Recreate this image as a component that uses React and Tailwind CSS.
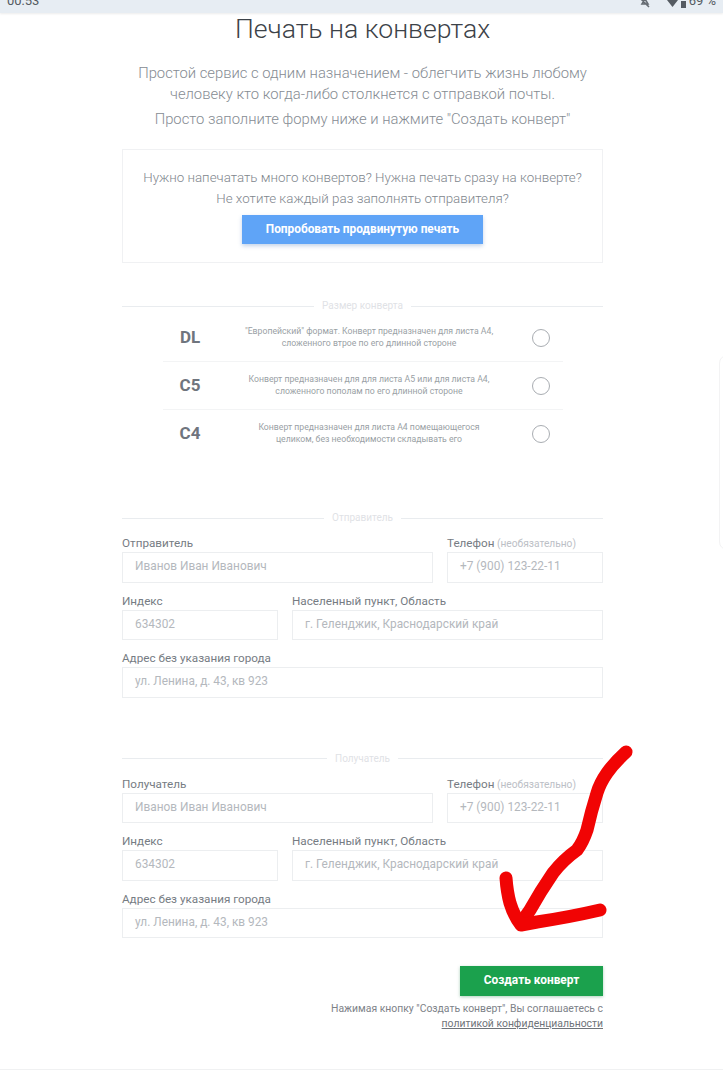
import React from "react";

const sizes = [
  { name: "DL", lines: ['"Европейский" формат. Конверт предназначен для листа А4,', "сложенного втрое по его длинной стороне"] },
  { name: "C5", lines: ["Конверт предназначен для для листа А5 или для листа А4,", "сложенного пополам по его длинной стороне"] },
  { name: "C4", lines: ["Конверт предназначен для листа А4 помещающегося", "целиком, без необходимости складывать его"] },
];

const Divider = ({ title, className }) => (
  <div className={`flex items-center gap-2 ${className}`}>
    <div className="h-px flex-1 bg-[#e9ecef]" />
    <span className="text-[10px] leading-3 text-[#dfe2e6]">{title}</span>
    <div className="h-px flex-1 bg-[#e9ecef]" />
  </div>
);

const Field = ({ label, hint, placeholder, className = "" }) => (
  <div className={className}>
    <div className="h-[18px] whitespace-nowrap text-[11.7px] leading-[18px] text-[#767c83]">
      {label}
      {hint && <span className="text-[10.2px] text-[#bcc0c6]"> {hint}</span>}
    </div>
    <div className="flex h-[30.5px] items-center border border-[#eceef0] pl-3 text-[11.85px] text-[#b4b8bd]">
      {placeholder}
    </div>
  </div>
);

const PersonForm = ({ label }) => (
  <div className="flex flex-col gap-[9px]">
    <div className="flex gap-[14px]">
      <Field label={label} placeholder="Иванов Иван Иванович" className="w-[311px]" />
      <Field label="Телефон" hint="(необязательно)" placeholder="+7 (900) 123-22-11" className="flex-1" />
    </div>
    <div className="flex gap-[14px]">
      <Field label="Индекс" placeholder="634302" className="w-[156px]" />
      <Field label="Населенный пункт, Область" placeholder="г. Геленджик, Краснодарский край" className="flex-1" />
    </div>
    <Field label="Адрес без указания города" placeholder="ул. Ленина, д. 43, кв 923" />
  </div>
);

export default function App() {
  return (
    <div className="relative h-[1080px] w-[723px] overflow-hidden bg-white font-['Roboto',sans-serif]">
      <div className="flex h-[13px] items-end justify-between overflow-hidden bg-[#e7edf3] pr-[7px] pb-[5px] pl-[7px] text-[13px] leading-[15px] text-[#555b62] shadow-[0_1px_2px_rgba(0,0,0,0.08)]">
        <span>00:53</span>
        <div className="flex items-end gap-[3px]">
          <svg width="10" height="10" viewBox="0 0 10 10" className="mr-[14px]" fill="none" stroke="#666c73" strokeWidth="1.6">
            <path d="M2 6 L5 1 L8 6 Z M1 1 L9 9" />
          </svg>
          <svg width="11" height="8" viewBox="0 0 11 8" fill="#555b62">
            <path d="M0 0 H11 L5.5 7 Z" />
          </svg>
          <div className="h-[7px] w-[5px] bg-[#555b62]" />
          <span>69 %</span>
        </div>
      </div>

      <main className="ml-[122px] w-[481px]">
        <h1 className="text-center text-[26.6px] leading-[32px] font-light whitespace-nowrap text-[#3c4248]">
          Печать на конвертах
        </h1>
        <div className="mt-[18px] text-center text-[14.8px] leading-[21px] font-light whitespace-nowrap text-[#868c93]">
          <p>Простой сервис с одним назначением - облегчить жизнь любому</p>
          <p>человеку кто когда-либо столкнется с отправкой почты.</p>
          <p className="mt-[4px]">Просто заполните форму ниже и нажмите "Создать конверт"</p>
        </div>

        <section className="mt-[19px] flex h-[114px] flex-col items-center border border-[#f0f1f3] pt-[18px] text-[13.35px] leading-[20.5px] font-light whitespace-nowrap text-[#80868d]">
          <p>Нужно напечатать много конвертов? Нужна печать сразу на конверте?</p>
          <p>Не хотите каждый раз заполнять отправителя?</p>
          <button className="mt-[6px] h-[29px] w-[241px] bg-[#5fa4f7] text-[11.85px] font-bold text-white shadow-[0_2px_4px_rgba(60,110,180,0.3)]">
            Попробовать продвинутую печать
          </button>
        </section>

        <Divider title="Размер конверта" className="mt-[37px]" />

        <div className="mx-auto mt-[2px] w-[400px]">
          {sizes.map((size, i) => (
            <div
              key={size.name}
              className={`flex h-[48px] items-center ${i < 2 ? "border-b border-[#f3f4f5]" : ""}`}
            >
              <div className="w-[55px] text-center text-[17px] font-bold text-[#6f757e]">{size.name}</div>
              <div className="w-[303px] pb-[2px] text-center text-[8.7px] leading-[12px] whitespace-nowrap text-[#9a9fa5]">
                {size.lines.map((line) => (
                  <p key={line}>{line}</p>
                ))}
              </div>
              <div className="ml-[11px] h-[18px] w-[18px] rounded-full border border-[#a9adb2]" />
            </div>
          ))}
        </div>

        <Divider title="Отправитель" className="mt-[54px]" />
        <div className="mt-[10px]">
          <PersonForm label="Отправитель" />
        </div>

        <Divider title="Получатель" className="mt-[55px]" />
        <div className="mt-[10px]">
          <PersonForm label="Получатель" />
        </div>

        <div className="mt-[28px] flex flex-col items-end">
          <button className="h-[29.5px] w-[143px] bg-[#1ba14d] text-[11.9px] font-bold text-white shadow-[0_1px_3px_rgba(20,120,60,0.35)]">
            Создать конверт
          </button>
          <p className="mt-[5.5px] text-[10.4px] leading-[15px] whitespace-nowrap text-[#7d8288]">
            Нажимая кнопку "Создать конверт", Вы соглашаетесь с
          </p>
          <a className="text-[10.4px] leading-[15px] whitespace-nowrap text-[#6f747a] underline">политикой конфиденциальности</a>
        </div>
      </main>

      <div className="absolute right-0 bottom-[10px] left-0 h-px bg-[#f0f1f2]" />
      <div className="absolute top-[355px] right-[-10px] h-[195px] w-[14px] rounded-l-[8px] border border-[#f3f3f4]" />

      <svg className="absolute inset-0" width="723" height="1080" fill="none" stroke="#f10404" strokeWidth="13" strokeLinecap="round" strokeLinejoin="round">
        <path d="M626 752 Q614 763 607 773 Q600 783 597 793 Q591 812 587 830 Q583 842 577 850 Q563 860 553 873 Q540 892 530 910 L521 923" />
        <path d="M506 878 Q507 892 510 903 Q514 916 521 925 L537 922 Q570 917 600 910" />
      </svg>
    </div>
  );
}
